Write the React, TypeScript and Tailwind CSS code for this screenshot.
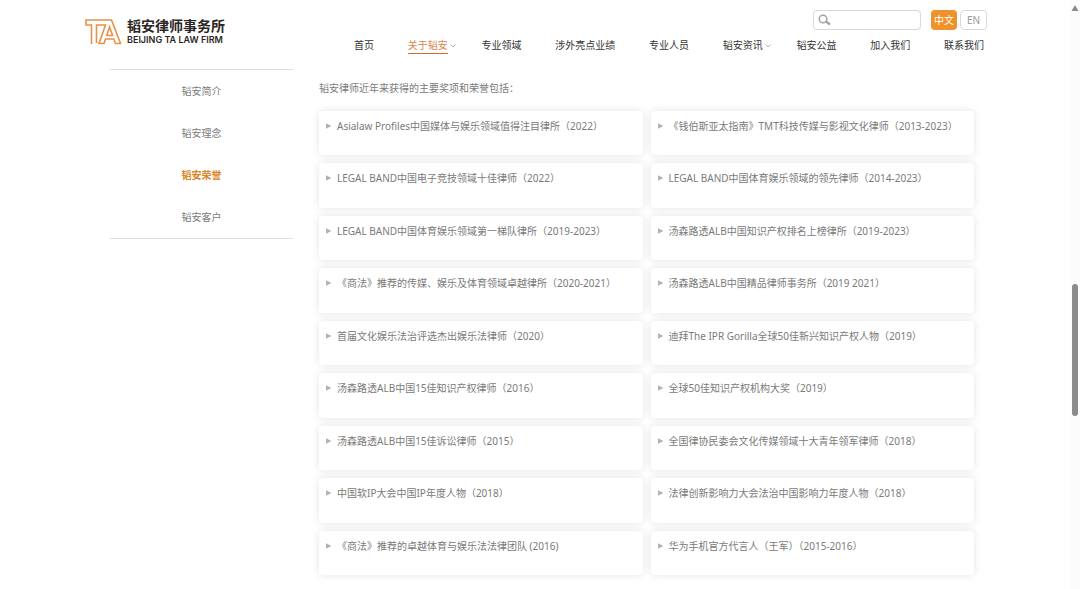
import { Fragment } from "react";

const navItems = [
  { label: "首页" },
  { label: "关于韬安", menu: true, active: true },
  { label: "专业领域" },
  { label: "涉外亮点业绩" },
  { label: "专业人员" },
  { label: "韬安资讯", menu: true },
  { label: "韬安公益" },
  { label: "加入我们" },
  { label: "联系我们" },
];

const sideItems = [
  { label: "韬安简介" },
  { label: "韬安理念" },
  { label: "韬安荣誉", active: true },
  { label: "韬安客户" },
];

const honors = [
  ["Asialaw Profiles中国媒体与娱乐领域值得注目律所（2022）", "《钱伯斯亚太指南》TMT科技传媒与影视文化律师（2013-2023）"],
  ["LEGAL BAND中国电子竞技领域十佳律师（2022）", "LEGAL BAND中国体育娱乐领域的领先律师（2014-2023）"],
  ["LEGAL BAND中国体育娱乐领域第一梯队律所（2019-2023）", "汤森路透ALB中国知识产权排名上榜律所（2019-2023）"],
  ["《商法》推荐的传媒、娱乐及体育领域卓越律所（2020-2021）", "汤森路透ALB中国精品律师事务所（2019 2021）"],
  ["首届文化娱乐法治评选杰出娱乐法律师（2020）", "迪拜The IPR Gorilla全球50佳新兴知识产权人物（2019）"],
  ["汤森路透ALB中国15佳知识产权律师（2016）", "全球50佳知识产权机构大奖（2019）"],
  ["汤森路透ALB中国15佳诉讼律师（2015）", "全国律协民委会文化传媒领域十大青年领军律师（2018）"],
  ["中国软IP大会中国IP年度人物（2018）", "法律创新影响力大会法治中国影响力年度人物（2018）"],
  ["《商法》推荐的卓越体育与娱乐法法律团队 (2016)", "华为手机官方代言人（王军）（2015-2016）"],
];

function Logo() {
  return (
    <a href="#" className="flex items-start gap-[5px] pt-[18px] text-[#2b2523]">
      <svg viewBox="0 0 37 27" className="h-[27px] w-[37px]" fill="none" stroke="#e8914a" strokeWidth="1.6" aria-hidden="true">
        <path d="M6.500 26V7H1V2H26.500L35.500 25.500H30.500L28.800 21H20.500L19 25.500H14L20.500 7H11.500V25" />
        <path d="M21.800 17.500L24.500 9L27.600 17.500Z" />
      </svg>
      <span className="flex flex-col">
        <span className="text-sm leading-4 font-bold">韬安律师事务所</span>
        <span className="font-['Inter','Noto_Sans',sans-serif] text-[9px] leading-3 font-semibold whitespace-nowrap">BEIJING TA LAW FIRM</span>
      </span>
    </a>
  );
}

function Chevron() {
  return (
    <svg viewBox="0 0 6 4" className="absolute top-[7px] left-full ml-0.5 h-1 w-1.5" fill="none" stroke="#b5b5b5" aria-hidden="true">
      <path d="M.5 .5L3 3L5.500 .5" />
    </svg>
  );
}

function Header() {
  return (
    <header className="flex justify-between">
      <Logo />
      <div className="flex w-[633px] flex-col pt-2.5">
        <div className="flex h-5 justify-end">
          <form role="search" className="flex w-[108px] items-center rounded-sm border border-[#d9d9d9] pl-1">
            <svg viewBox="0 0 13 12" className="h-3 w-[13px] shrink-0" fill="none" stroke="#a3a3a3" aria-hidden="true">
              <circle cx="5" cy="5" r="3.800" strokeWidth="1.500" />
              <path d="M8 7.500L12 10.500" strokeWidth="2.200" />
            </svg>
            <input type="search" aria-label="搜索" className="min-w-0 flex-1 bg-transparent outline-none" />
          </form>
          <button type="button" className="ml-2.5 w-[26px] rounded-sm bg-[#ee932b] text-white">中文</button>
          <button type="button" className="ml-[3px] w-[27px] rounded-sm border border-[#d9d9d9] text-[#999]">EN</button>
        </div>
        <nav className="mt-[7px] flex justify-between pr-[3px] text-[#333]">
          {navItems.map((item) => (
            <a
              key={item.label}
              href="#"
              className={item.active ? "relative border-b border-[#cf6f2e] leading-4 text-[#d9864c]" : "relative leading-4"}
            >
              {item.label}
              {item.menu && <Chevron />}
            </a>
          ))}
        </nav>
      </div>
    </header>
  );
}

function Honor({ text }: { text: string }) {
  return (
    <li className="flex items-start gap-[5px] rounded-sm bg-white pt-[7px] pl-[7px] shadow-[0_0_9px_rgba(0,0,0,0.11)]">
      <svg viewBox="0 0 6 6" className="mt-[5px] h-1.5 w-1.5 shrink-0" fill="#b3b3b3" aria-hidden="true">
        <path d="M0 0.300L5.500 3L0 5.700Z" />
      </svg>
      <span className="leading-4">{text}</span>
    </li>
  );
}

export default function App() {
  return (
    <div className="relative min-h-screen bg-white pr-2.5 font-['Noto_Sans','Noto_Sans_CJK_SC',sans-serif] text-[10px] text-[#7a7a7a]">
      <div className="mx-auto max-w-[904px] pl-0.5">
        <Header />
        <div className="flex items-start pr-[13px] pl-[25px]">
          <aside className="mt-[15px] w-[183px] shrink-0 border-y border-[#dedede]">
            <ul>
              {sideItems.map((item) => (
                <li key={item.label}>
                  <a href="#" className={item.active ? "block text-center leading-[42px] font-bold text-[#d98425]" : "block text-center leading-[42px]"}>
                    {item.label}
                  </a>
                </li>
              ))}
            </ul>
          </aside>
          <main className="ml-[26px] flex-1 pt-[26px]">
            <p className="leading-4">韬安律师近年来获得的主要奖项和荣誉包括：</p>
            <ul className="mt-[15px] grid min-h-[464px] auto-rows-fr grid-cols-2 gap-2">
              {honors.map(([left, right]) => (
                <Fragment key={left}>
                  <Honor text={left} />
                  <Honor text={right} />
                </Fragment>
              ))}
            </ul>
          </main>
        </div>
      </div>
      <div className="absolute inset-y-0 right-0 w-2.5 bg-[#fcfcfc]" aria-hidden="true">
        <svg viewBox="0 0 8 6" className="mt-[5px] ml-px h-1.5 w-2" fill="#8a8a8a">
          <path d="M4 0L7.500 6H.5Z" />
        </svg>
        <div className="mt-[273px] ml-0.5 h-[132px] w-1.5 rounded-full bg-[#8b8b8b]" />
      </div>
    </div>
  );
}
